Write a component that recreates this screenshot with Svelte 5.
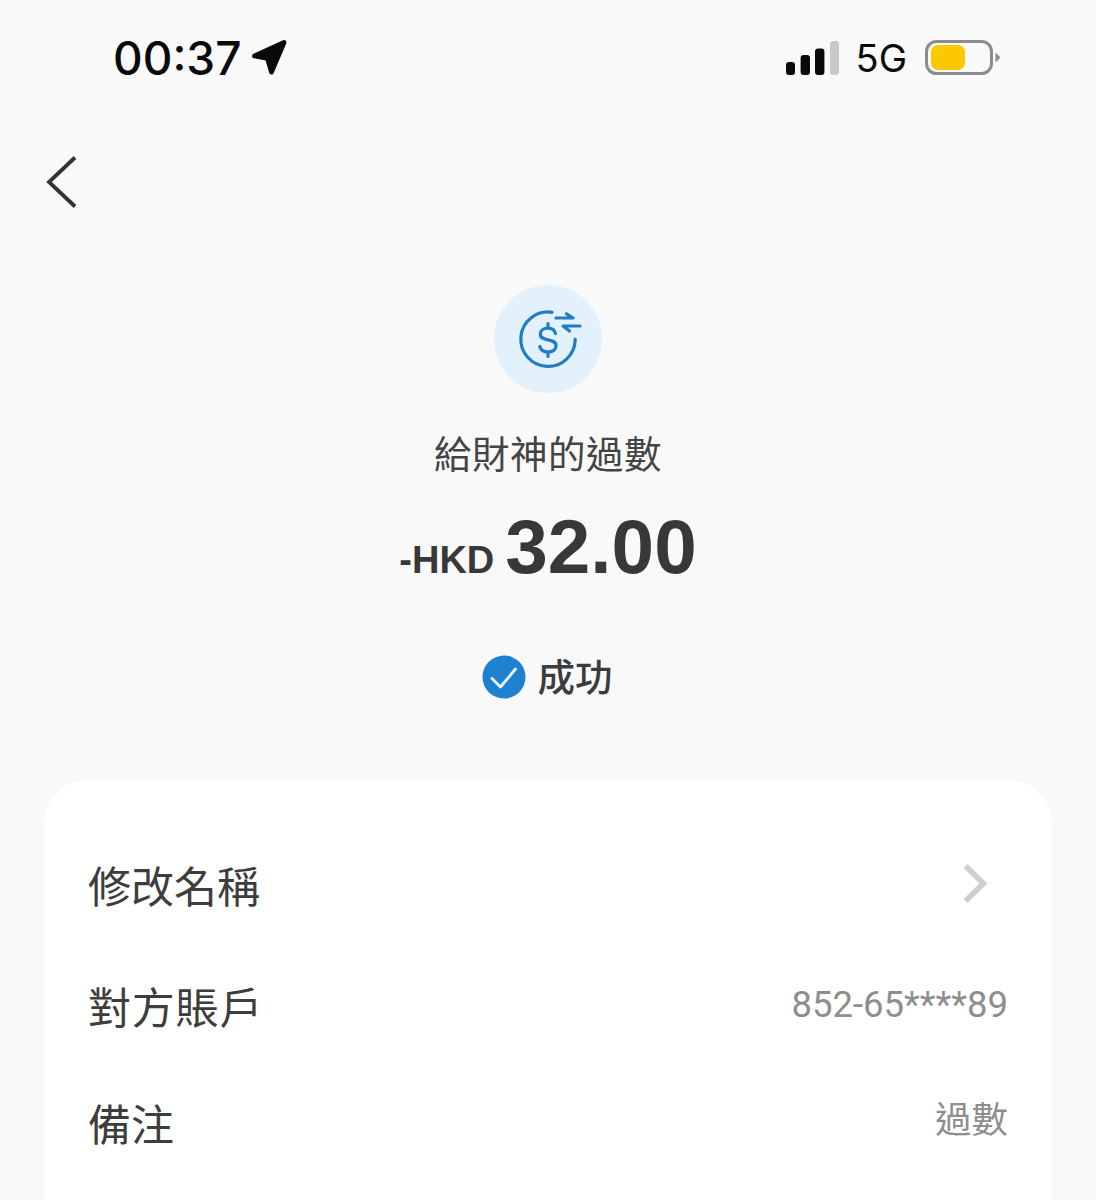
<script>
  const rows = [
    { label: '修改名稱', chevron: true },
    { label: '對方賬戶', value: '852-65****89' },
    { label: '備注', value: '過數' }
  ];
</script>

<div class="page">
  <header class="status">
    <div class="time">
      <span>00:37</span>
      <svg class="loc" width="38" height="38" viewBox="0 0 38 38"><path d="M3.5 17 L33 3.5 L20.5 33 L16.5 19.5 Z" fill="#0a0a0a" stroke="#0a0a0a" stroke-width="4.8" stroke-linejoin="round"/></svg>
    </div>
    <div class="right">
      <svg class="signal" width="53" height="34" viewBox="0 0 53 34">
        <rect x="0" y="21" width="9" height="13" rx="3" fill="#0a0a0a"/>
        <rect x="14.6" y="14" width="9.4" height="20" rx="3" fill="#0a0a0a"/>
        <rect x="29" y="7.5" width="9.4" height="26.5" rx="3" fill="#0a0a0a"/>
        <rect x="44" y="0" width="9" height="34" rx="3" fill="#c9c9c9"/>
      </svg>
      <span class="net">5G</span>
      <svg class="battery" width="76" height="36" viewBox="0 0 76 36">
        <rect x="1.5" y="1.5" width="65" height="32" rx="10" fill="none" stroke="#8c8c8c" stroke-width="3"/>
        <rect x="6" y="5" width="34" height="25" rx="7" fill="#fdc800"/>
        <path d="M70.5 12.5 L74.5 16.5 Q75.2 17.5 74.5 18.5 L70.5 22.5 Z" fill="#8c8c8c"/>
      </svg>
    </div>
  </header>

  <nav class="nav">
    <svg width="34" height="54" viewBox="0 0 34 54"><path d="M30 2.5 L4 27 L30 51.5" fill="none" stroke="#333" stroke-width="3.8"/></svg>
  </nav>

  <section class="summary">
    <div class="badge">
      <svg width="108" height="108" viewBox="0 0 108 108" fill="none" stroke="#1f7dc6" stroke-width="3.2" stroke-linecap="round" stroke-linejoin="round">
        <path d="M58 27.3 A27.2 27.2 0 1 0 81.2 54"/>
        <path d="M54 38.5 V43 M54 67 V71.5"/>
        <path d="M61.5 48.5 C60.5 45 58 43.2 54 43.2 C49.5 43.2 46.3 45.6 46.3 49.2 C46.3 57.2 62 52.5 62 60.6 C62 64.8 58.5 67 54 67 C49.7 67 46.8 65 45.8 61.5"/>
        <path d="M62 33 H79 L72.5 28.8"/>
        <path d="M86 41 H69 L75.5 46"/>
      </svg>
    </div>
    <h1 class="title">給財神的過數</h1>
    <div class="amount"><span class="cur">-HKD</span> <span class="num">32.00</span></div>
    <div class="state">
      <svg width="44" height="44" viewBox="0 0 44 44">
        <circle cx="22" cy="22" r="21.5" fill="#1f7fd1"/>
        <path d="M10 23.5 L18.5 32 L33.5 14" fill="none" stroke="#e8f4fd" stroke-width="2.8" stroke-linecap="round" stroke-linejoin="round"/>
      </svg>
      <span>成功</span>
    </div>
  </section>

  <section class="card">
    {#each rows as r}
      <div class="row">
        <span class="label">{r.label}</span>
        {#if r.chevron}
          <svg class="chev" width="26" height="42" viewBox="0 0 26 42"><path d="M2.5 3 L20.5 20.5 L2.5 38" fill="none" stroke="#cfcfcf" stroke-width="5.6"/></svg>
        {:else}
          <span class="value">{r.value}</span>
        {/if}
      </div>
    {/each}
  </section>
</div>

<style>
  :global(body) { margin: 0; background: #f9f9f9; }
  .page {
    width: 1096px;
    height: 1200px;
    overflow: hidden;
    background: #f9f9f9;
    font-family: "Noto Sans CJK TC", "Liberation Sans", sans-serif;
    color: #333;
  }
  .status {
    height: 116px;
    box-sizing: border-box;
    padding: 33px 95px 0 113px;
    display: flex;
    justify-content: space-between;
    align-items: flex-start;
  }
  .time {
    display: flex;
    align-items: center;
    gap: 10px;
    font: 500 46px/50px Inter, "Liberation Sans", sans-serif;
    color: #0a0a0a;
  }
  .right { display: flex; align-items: center; margin-top: 6px; }
  .signal { margin-right: 17px; }
  .net {
    font: 400 38px/38px Inter, "Liberation Sans", sans-serif;
    color: #0a0a0a;
    margin-right: 18px;
  }
  .nav { height: 169px; padding: 39px 0 0 45px; box-sizing: border-box; }
  .nav svg { display: block; }
  .summary { display: flex; flex-direction: column; align-items: center; height: 495px; }
  .badge {
    width: 108px;
    height: 108px;
    border-radius: 50%;
    background: #e3f1fc;
  }
  .badge svg { display: block; }
  .title {
    margin: 33px 0 0;
    font-size: 37.5px;
    font-weight: 400;
    line-height: 52px;
    color: #444;
    letter-spacing: .5px;
  }
  .amount {
    margin-top: 24px;
    display: flex;
    align-items: baseline;
    gap: 11px;
    font-family: "Liberation Sans", Arial, sans-serif;
    font-weight: 700;
    color: #383838;
    line-height: 90px;
  }
  .cur { font-size: 38px; }
  .num { font-size: 76.5px; }
  .state {
    margin-top: 45px;
    margin-left: -2px;
    display: flex;
    align-items: center;
    gap: 12px;
    font-size: 37.5px;
    font-weight: 500;
    line-height: 50px;
    color: #3c3c3c;
  }
  .state svg { margin-top: 3px; }
  .card {
    margin: 0 44px;
    height: 500px;
    background: #fff;
    border-radius: 44px;
    padding: 44px 44px 0 44px;
    box-sizing: border-box;
  }
  .row {
    height: 117px;
    display: flex;
    align-items: center;
    justify-content: space-between;
  }
  .row:first-child { height: 122px; padding-bottom: 3px; box-sizing: border-box; }
  .row:nth-child(2) .label { letter-spacing: .8px; }
  .row:nth-child(3) .value { margin-top: -8px; }
  .label { font-size: 43px; color: #3d3d3d; line-height: 60px; }
  .value { font-family: Roboto, "Noto Sans CJK TC", sans-serif; font-size: 36.5px; color: #8e8e8e; }
  .chev { margin-right: 19px; }
</style>
